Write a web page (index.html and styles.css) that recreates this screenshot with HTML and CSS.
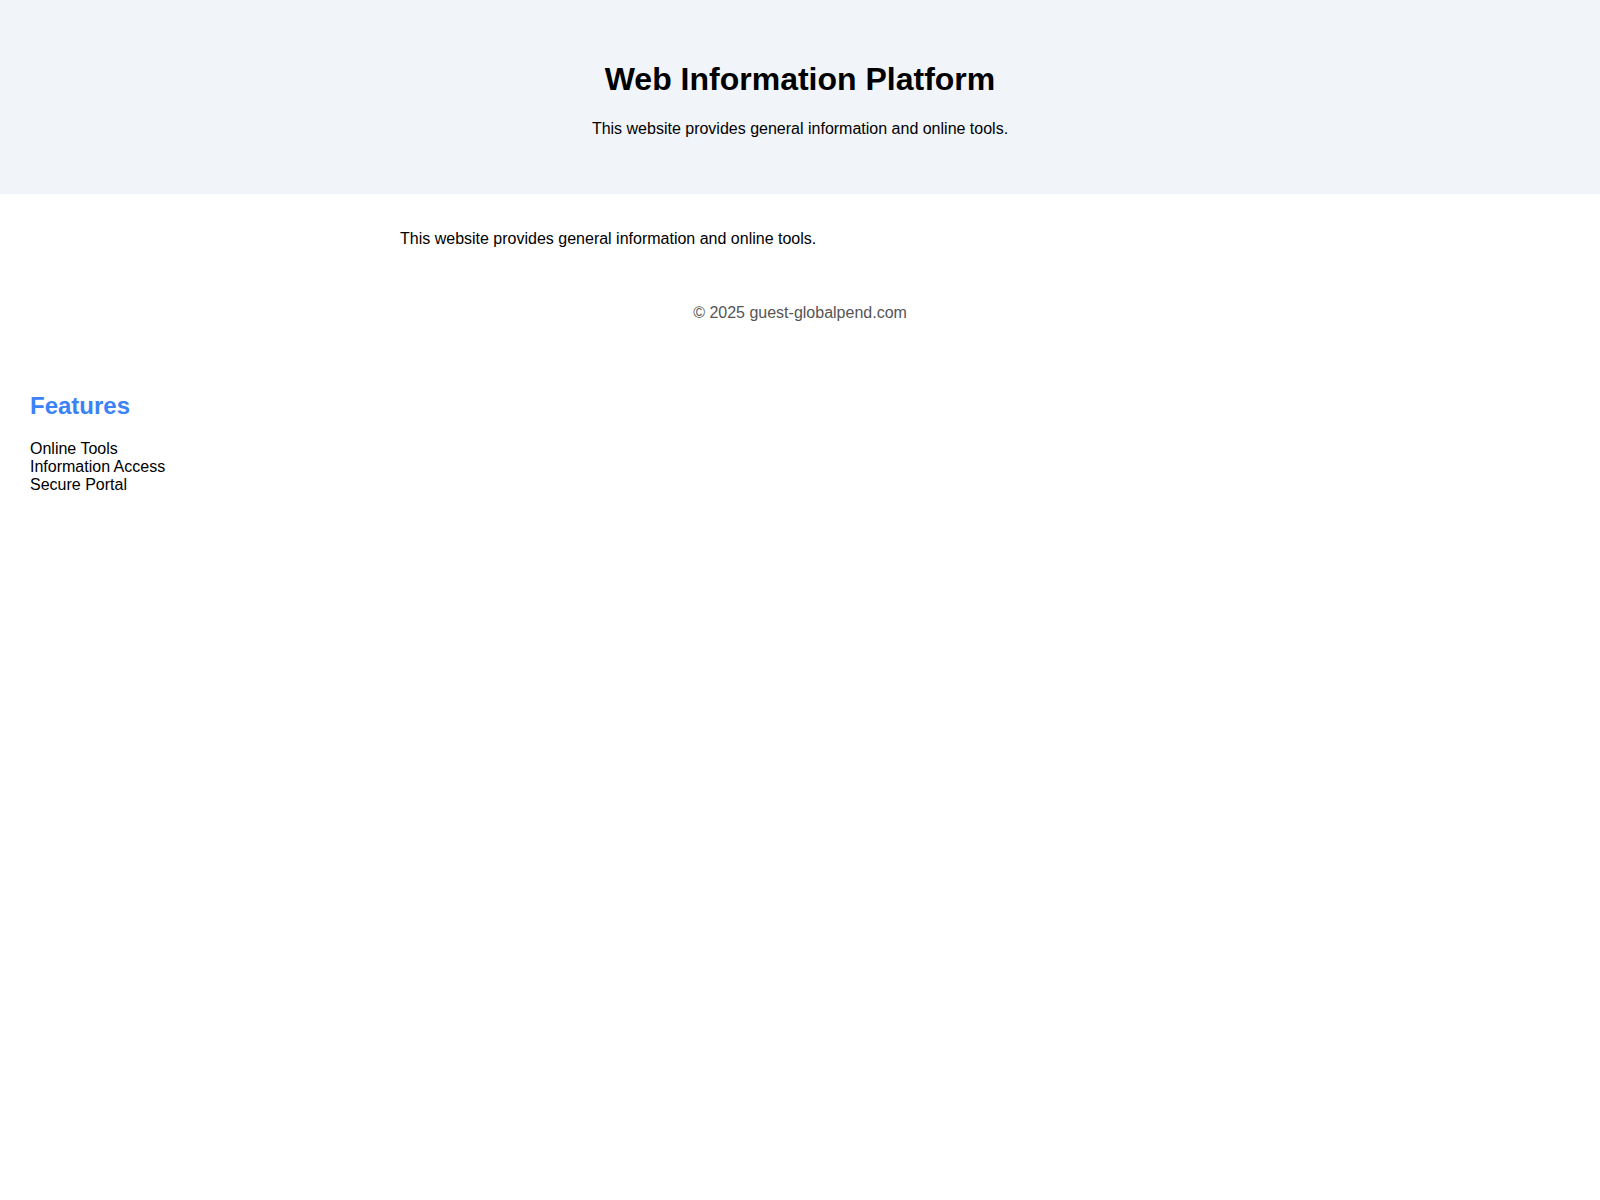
FILE: index.html
```html
<!DOCTYPE html>
<html lang="en">
<head>
<meta charset="utf-8">
<title>Web Information Platform</title>
<link rel="stylesheet" href="styles.css">
</head>
<body>
<header class="site-header">
  <h1 class="site-title">Web Information Platform</h1>
  <p class="site-tagline">This website provides general information and online tools.</p>
</header>
<main class="content">
  <p>This website provides general information and online tools.</p>
</main>
<footer class="site-footer">
  <p>© 2025 guest-globalpend.com</p>
</footer>
<section class="features">
  <h2 class="features-title">Features</h2>
  <ul class="features-list">
    <li>Online Tools</li>
    <li>Information Access</li>
    <li>Secure Portal</li>
  </ul>
</section>
</body>
</html>
```

FILE: styles.css
```css
body {
  margin: 0;
  font-family: "Liberation Sans", Arial, sans-serif;
  color: #000;
  background: #fff;
}
.site-header {
  background: #f1f5f9;
  padding: 40px 20px;
  text-align: center;
}
.site-title {
  font-size: 32px;
  margin: 0.67em 0;
}
.site-tagline {
  margin: 16px 0;
}
.content {
  max-width: 800px;
  margin: 0 auto;
  padding: 20px 0;
}
.content p {
  margin: 16px 0;
}
.site-footer {
  padding: 20px;
  text-align: center;
  color: #555;
}
.site-footer p {
  margin: 0;
}
.features {
  padding: 30px;
}
.features-title {
  color: #3b82f6;
  font-size: 24px;
  margin: 0.83em 0;
}
.features-list {
  list-style: none;
  margin: 0;
  padding: 0;
}
```
